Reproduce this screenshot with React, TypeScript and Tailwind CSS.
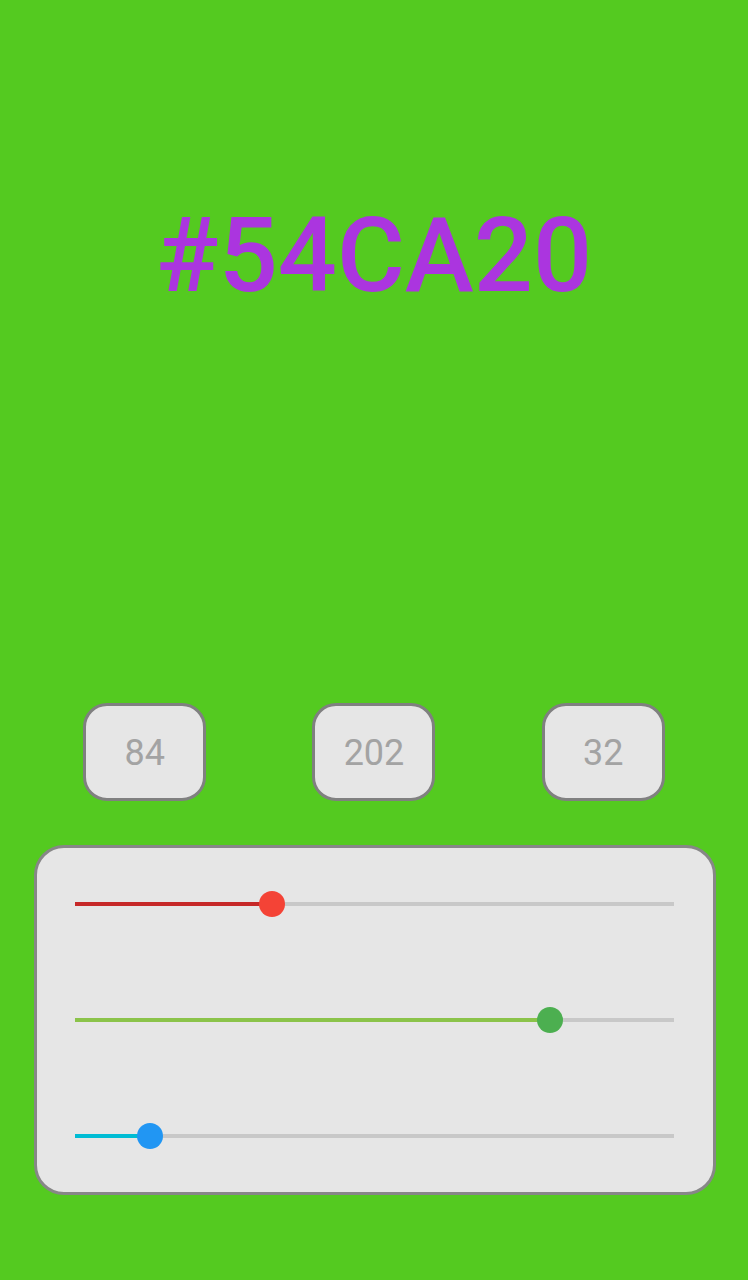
import React from "react";

const channels = [
  { value: 84, active: "#c62828", thumb: "#f44336" },
  { value: 202, active: "#8bc34a", thumb: "#4caf50" },
  { value: 32, active: "#00bcd4", thumb: "#2196f3" },
];

function Slider({ value, active, thumb }: { value: number; active: string; thumb: string }) {
  const pct = (value / 255) * 100;
  return (
    <div className="relative h-[26px] flex items-center">
      <div className="relative w-full h-[4px] bg-[#c8c8c8]">
        <div className="absolute left-0 top-0 h-[4px]" style={{ width: `${pct}%`, background: active }} />
        <div
          className="absolute top-1/2 w-[26px] h-[26px] rounded-full -translate-x-1/2 -translate-y-1/2"
          style={{ left: `${pct}%`, background: thumb }}
        />
      </div>
    </div>
  );
}

export default function App() {
  return (
    <div
      className="w-[748px] h-[1280px] bg-[#54ca20] flex flex-col overflow-hidden"
      style={{ fontFamily: "Roboto, 'Noto Sans', sans-serif" }}
    >
      <div className="mt-[204px] h-[104px] flex items-center justify-center">
        <span className="text-[104px] leading-none font-medium text-[#ab35df]">#54CA20</span>
      </div>
      <div className="mt-[395px] px-[30px] grid grid-cols-3">
        {channels.map((c) => (
          <div key={c.value} className="flex justify-center">
            <div className="w-[123px] h-[98px] rounded-[24px] border-[3px] border-[#808080] bg-[#e6e6e6] flex items-center justify-center">
              <span className="text-[36px] text-[#a3a3a3] leading-none pt-[2px]">{c.value}</span>
            </div>
          </div>
        ))}
      </div>
      <div className="mt-[44px] ml-[34px] mr-[32px] h-[350px] rounded-[30px] border-[3px] border-[#878787] bg-[#e6e6e6] pl-[38px] pr-[39px] pt-[43px] flex flex-col gap-[90px]">
        {channels.map((c) => (
          <Slider key={c.value} {...c} />
        ))}
      </div>
    </div>
  );
}
